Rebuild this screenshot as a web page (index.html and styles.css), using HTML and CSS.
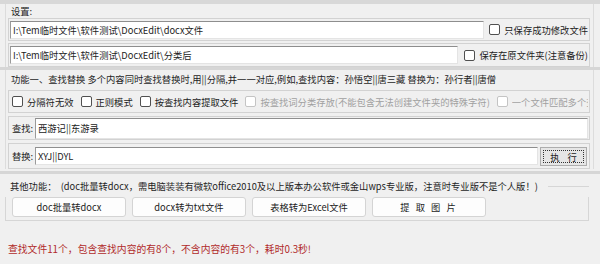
FILE: index.html
```html
<!DOCTYPE html>
<html lang="zh">
<head>
<meta charset="utf-8">
<link rel="stylesheet" href="styles.css">
</head>
<body>
<div class="top"></div>
<section class="grp g1">
  <div class="legend">设置:</div>
  <div class="panel">
    <div class="field w1">I:\Tem临时文件\软件测试\DocxEdit\docx文件</div>
    <label class="cb"><span class="box"></span>只保存成功修改文件</label>
  </div>
  <div class="panel p2">
    <div class="field w2">I:\Tem临时文件\软件测试\DocxEdit\分类后</div>
    <label class="cb"><span class="box"></span>保存在原文件夹(注意备份)</label>
  </div>
</section>
<div class="sep"></div>
<section class="grp g2">
  <div class="legend">功能一、查找替换 多个内容同时查找替换时,用||分隔,并一一对应,例如,查找内容：孙悟空||唐三藏 替换为：孙行者||唐僧</div>
  <div class="panel checks">
    <label class="cb"><span class="box"></span>分隔符无效</label>
    <label class="cb"><span class="box"></span>正则模式</label>
    <label class="cb"><span class="box"></span>按查找内容提取文件</label>
    <label class="cb dis"><span class="box"></span>按查找词分类存放(不能包含无法创建文件夹的特殊字符)</label>
    <label class="cb dis clip"><span class="box"></span><span class="cliptext">一个文件匹配多个查找</span></label>
  </div>
  <div class="panel lab search">
    <span class="lbl">查找:</span>
    <div class="field grow">西游记||东游录</div>
  </div>
  <div class="panel lab replace">
    <span class="lbl">替换:</span>
    <div class="field w3">XYJ||DYL</div>
    <button class="exec"><span class="focus">执 行</span></button>
  </div>
</section>
<div class="sep"></div>
<section class="g3">
  <div class="legend3"><span>其他功能：&nbsp;&nbsp;(doc批量转docx，需电脑装装有微软office2010及以上版本办公软件或金山wps专业版，注意时专业版不是个人版！)</span><i class="line"></i></div>
  <div class="btns">
    <button class="btn">doc批量转docx</button>
    <button class="btn">docx转为txt文件</button>
    <button class="btn">表格转为Excel文件</button>
    <button class="btn">提 取 图 片</button>
  </div>
</section>
<div class="status">查找文件11个，包含查找内容的有8个，不含内容的有3个，耗时0.3秒!</div>
</body>
</html>
```

FILE: styles.css
```css
html, body {
  margin: 0;
  padding: 0;
  width: 600px;
  height: 264px;
  overflow: hidden;
  background: #f0f0f0;
  font-family: "Noto Sans CJK SC", "Noto Sans", sans-serif;
  font-size: 9.3px;
  color: #1e1e1e;
}
.top {
  height: 4px;
  background: #d8d8d8;
}
.grp {
  margin: 0 6px 0 5px;
  border-left: 1px solid #dcdcdc;
  border-right: 1px solid #dcdcdc;
  padding: 0 3px 0 2px;
}
.legend {
  height: 14px;
  line-height: 14px;
  padding-left: 3px;
  white-space: nowrap;
}
.g2 .legend {
  height: 19px;
  line-height: 19px;
}
.panel {
  display: flex;
  align-items: center;
  border: 1px solid #d2d2d2;
  height: 21px;
  box-sizing: content-box;
  padding: 0 1px;
}
.p2 {
  margin-top: 2px;
  height: 22px;
}
.field {
  box-sizing: border-box;
  height: 18px;
  line-height: 16px;
  background: #fff;
  border-top: 1px solid #8e8e8e;
  border-left: 1px solid #9a9a9a;
  border-right: 1px solid #e4e4e4;
  border-bottom: 1px solid #e4e4e4;
  padding-left: 2px;
  white-space: nowrap;
  overflow: hidden;
  color: #222;
}
.w1 { width: 475px; }
.w2 { width: 449px; }
.w3 { width: 503px; }
.grow { flex: 1; height: 21px; line-height: 19px; }
.cb {
  display: flex;
  align-items: center;
  white-space: nowrap;
  color: #222;
}
.g1 .cb { margin-left: 5px; }
.g1 .p2 .cb { margin-left: 6px; }
.box {
  display: inline-block;
  flex: 0 0 auto;
  width: 9px;
  height: 9px;
  border: 1px solid #505050;
  border-radius: 2px;
  background: #fff;
  margin-right: 4px;
}
.dis { color: #a0a0a0; }
.dis .box { border-color: #c4c4c4; }
.checks {
  margin-top: 1px;
  padding-left: 3px;
  gap: 7px;
  overflow: hidden;
}
.clip {
  flex: 1 1 auto;
  min-width: 0;
}
.cliptext {
  overflow: hidden;
  white-space: nowrap;
}
.lab { padding-left: 3px; }
.lbl {
  width: 23px;
  flex: 0 0 23px;
  color: #222;
}
.search {
  margin-top: 3px;
  height: 22px;
  padding-right: 1px;
}
.replace {
  margin-top: 3px;
  height: 24px;
  margin-bottom: 2px;
}
.exec {
  margin-left: 2px;
  width: 47px;
  height: 19px;
  padding: 2px;
  border: 1px solid #adadad;
  background: #e6e6e6;
  font: inherit;
  color: #222;
  display: flex;
}
.focus {
  flex: 1;
  border: 1px dotted #333;
  line-height: 12px;
  letter-spacing: 3px;
  padding-left: 3px;
  text-align: center;
}
.sep {
  height: 3px;
  background: #d6d6d6;
}
.g3 {
  padding-top: 4px;
}
.legend3 {
  margin: 0 11px 0 5px;
  display: flex;
  align-items: center;
  height: 16px;
  white-space: nowrap;
}
.legend3 span { padding-left: 5px; }
.line {
  flex: 1;
  height: 1px;
  background: #d6d6d6;
  margin-left: 10px;
}
.btns {
  margin: 3px 11px 0 5px;
  border-left: 1px solid #d6d6d6;
  border-right: 1px solid #d6d6d6;
  border-bottom: 1px solid #d6d6d6;
  padding: 0 0 3px 6px;
  display: flex;
  gap: 6px;
}
.btn {
  width: 114px;
  height: 20px;
  border: 1px solid #d4d4d4;
  border-radius: 3px;
  background: #fdfdfd;
  font: inherit;
  color: #222;
  padding: 0;
}
.btn:last-child { letter-spacing: 2px; }
.status {
  padding: 21px 0 0 8px;
  line-height: 14px;
  font-size: 9.8px;
  color: #b12a2a;
  white-space: nowrap;
}
```
